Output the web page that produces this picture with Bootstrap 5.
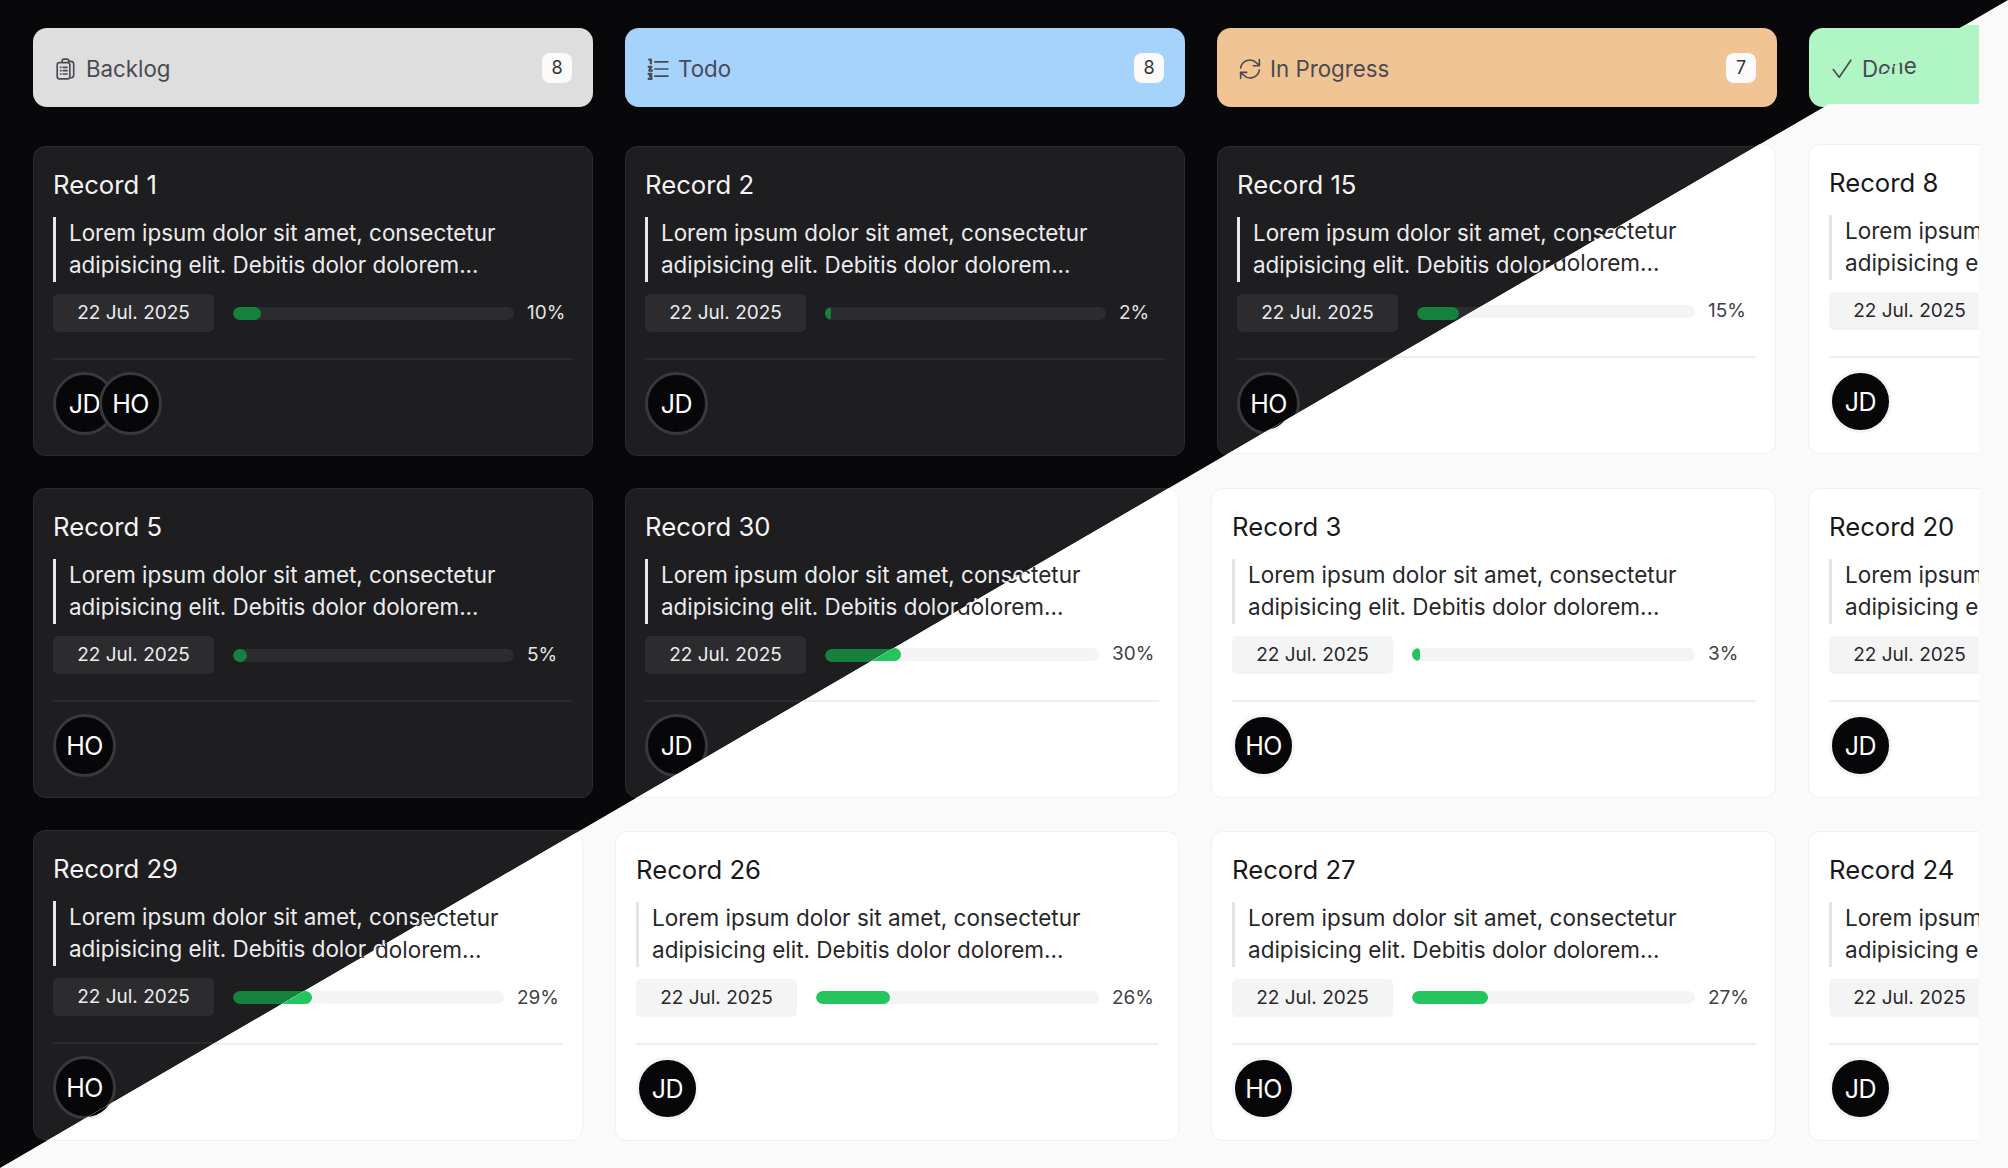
<!DOCTYPE html>
<html lang="en">
<head>
<meta charset="utf-8">
<title>Kanban</title>
<link href="https://cdn.jsdelivr.net/npm/bootstrap@5.3.0/dist/css/bootstrap.min.css" rel="stylesheet">
<style>
html,body{margin:0;height:100%;overflow:hidden}
body{font-family:Inter,"Liberation Sans",sans-serif;background:#08080b}
.kb-page{width:2008px;height:1168px;position:relative;overflow:hidden}
.kb-layer{position:absolute;top:0;left:0;width:2008px;height:1168px}
.kb-dark{background:#08080b;--t:#f4f4f5;--d:#ececee;--card:#1e1e20;--line:#2b2b2e;--chip:#2c2c2f;--bar:#e8e8ea;--fill:#16803d;--ava:#38383d;--pct:#e4e4e7;--rule:#2a2a2d}
.kb-light{background:#fafafa;clip-path:polygon(100% 0,100% 100%,0 100%);--t:#18181b;--d:#27272a;--card:#fff;--line:#f0f0f1;--chip:#f4f4f5;--bar:#e4e4e7;--fill:#22c55e;--ava:#f4f4f5;--pct:#3f3f46;--rule:#eeeef0}
.kb-board{width:1979px;height:1168px;overflow:hidden;padding-left:33px;gap:32px;padding-top:28px}
.kb-light .kb-board{padding-top:25px;gap:32px}
.kb-col{flex:0 0 560px;gap:32px}
.kb-light .kb-col{gap:33.3px}
.kb-light .kb-w1{flex-basis:550px}
.kb-light .kb-w2{flex-basis:564px}
.kb-light .kb-w3{flex-basis:565px}
.kb-head{height:79px;border-radius:14px;padding:2px 21px 0 22px;margin-bottom:7px;font-size:22.3px;color:#4a4a55;border:0}
.kb-h1{background:#dedede}.kb-h2{background:#a5d3fb}.kb-h3{background:#f0c593}.kb-h4{background:#b0f5c4}
.kb-ico{width:22px;height:22px;fill:none;stroke:#4a4a55;stroke-width:1.5;stroke-linecap:round;stroke-linejoin:round;margin-right:9px;flex:none}
.kb-count{background:#fafafa;color:#333338;font-size:18px;font-weight:400;border-radius:8px;min-width:30px;height:30px;line-height:30px;padding:0 8px;text-align:center;margin-top:-2px}
.kb-rec{height:310px;border-radius:12px;background:var(--card);border:1px solid var(--line)}
.kb-rec .card-body{padding:19px}
.kb-light .kb-rec .card-body{padding-left:20px}
.kb-title{font-size:25.7px;line-height:38px;font-weight:400;color:var(--t);margin:0 0 13px}
.kb-desc{font-size:22.4px;line-height:32px;color:var(--d);border-left:3px solid var(--bar);padding-left:13px;margin:0 0 12px;height:65px}
.kb-light .kb-desc{font-size:22.5px}
.kb-meta{height:38px;gap:0}
.kb-date{background:var(--chip);color:var(--d);font-size:19px;border-radius:5px;height:38px;width:161px;flex:none;text-align:center;line-height:38px}
.kb-track{height:13px;flex:0 1 283px;min-width:0;margin:0 13px 0 19px;background:var(--chip);border-radius:7px}
.kb-track .progress-bar{background:var(--fill);border-radius:7px}
.kb-pct{font-size:19px;color:var(--pct);flex:0 0 46px}
.kb-rule{height:2px;background:var(--rule);margin:26px 0 12px}
.kb-ava{width:63px;height:63px;border-radius:50%;background:#070709;border:3px solid var(--ava);color:#fff;font-size:25px;line-height:58px;text-align:center;letter-spacing:-.5px;flex:none}
.kb-ava+.kb-ava{margin-left:-17px}
</style>
</head>
<body>
<div class="kb-page">
<svg class="d-none" aria-hidden="true">
<symbol id="i-clip" viewBox="0 0 20 20"><path d="M6.500 3.500V2.600A1.600 1.600 0 0 1 8.100 1h2.800a1.600 1.600 0 0 1 1.600 1.600V3.500M12.500 3h2a2.500 2.500 0 0 1 2.500 2.500v10a2.500 2.500 0 0 1-2.500 2.500"/><rect x="2" y="4.200" width="11.500" height="14.800" rx="2"/><path d="M5 8.500h.5M7.500 8.500H11M5 11.500h.5M7.500 11.500H11M5 14.500h.5M7.500 14.500H11"/></symbol>
<symbol id="i-list" viewBox="0 0 20 20"><path d="M7 3.500h12M7 10h12M7 16.500h12"/><path stroke-width="2" d="M2 1.500h1.500V5M1.500 8h2.500L2 11.500h2.500M1.500 14.500h2.500L2.500 16.500h1.500V19h-2.500"/></symbol>
<symbol id="i-sync" viewBox="0 0 20 20"><path d="M1.500 9A8.500 8.500 0 0 1 16 4.500l2.500 2.500M18.500 1.500V7H13M18.500 11A8.500 8.500 0 0 1 4 15.500L1.500 13M1.500 18.500V13H7"/></symbol>
<symbol id="i-ok" viewBox="0 0 20 20"><path d="M2 10.500l5.500 7L18 2"/></symbol>
</svg>

<main class="kb-layer kb-dark">
<div class="kb-board d-flex">
<section class="kb-col d-flex flex-column">
<header class="kb-head kb-h1 d-flex align-items-center"><svg class="kb-ico"><use href="#i-clip"/></svg><span>Backlog</span><span class="kb-count ms-auto">8</span></header>
<article class="card kb-rec"><div class="card-body"><h5 class="kb-title">Record 1</h5><p class="kb-desc">Lorem ipsum dolor sit amet, consectetur adipisicing elit. Debitis dolor dolorem...</p><div class="kb-meta d-flex align-items-center"><span class="kb-date">22 Jul. 2025</span><div class="progress kb-track"><div class="progress-bar" style="width:10%"></div></div><span class="kb-pct">10%</span></div><div class="kb-rule"></div><div class="d-flex"><span class="kb-ava">JD</span><span class="kb-ava">HO</span></div></div></article>
<article class="card kb-rec"><div class="card-body"><h5 class="kb-title">Record 5</h5><p class="kb-desc">Lorem ipsum dolor sit amet, consectetur adipisicing elit. Debitis dolor dolorem...</p><div class="kb-meta d-flex align-items-center"><span class="kb-date">22 Jul. 2025</span><div class="progress kb-track"><div class="progress-bar" style="width:5%"></div></div><span class="kb-pct">5%</span></div><div class="kb-rule"></div><div class="d-flex"><span class="kb-ava">HO</span></div></div></article>
<article class="card kb-rec"><div class="card-body"><h5 class="kb-title">Record 29</h5><p class="kb-desc">Lorem ipsum dolor sit amet, consectetur adipisicing elit. Debitis dolor dolorem...</p><div class="kb-meta d-flex align-items-center"><span class="kb-date">22 Jul. 2025</span><div class="progress kb-track"><div class="progress-bar" style="width:29%"></div></div><span class="kb-pct">29%</span></div><div class="kb-rule"></div><div class="d-flex"><span class="kb-ava">HO</span></div></div></article>
</section>
<section class="kb-col d-flex flex-column">
<header class="kb-head kb-h2 d-flex align-items-center"><svg class="kb-ico"><use href="#i-list"/></svg><span>Todo</span><span class="kb-count ms-auto">8</span></header>
<article class="card kb-rec"><div class="card-body"><h5 class="kb-title">Record 2</h5><p class="kb-desc">Lorem ipsum dolor sit amet, consectetur adipisicing elit. Debitis dolor dolorem...</p><div class="kb-meta d-flex align-items-center"><span class="kb-date">22 Jul. 2025</span><div class="progress kb-track"><div class="progress-bar" style="width:2%"></div></div><span class="kb-pct">2%</span></div><div class="kb-rule"></div><div class="d-flex"><span class="kb-ava">JD</span></div></div></article>
<article class="card kb-rec"><div class="card-body"><h5 class="kb-title">Record 30</h5><p class="kb-desc">Lorem ipsum dolor sit amet, consectetur adipisicing elit. Debitis dolor dolorem...</p><div class="kb-meta d-flex align-items-center"><span class="kb-date">22 Jul. 2025</span><div class="progress kb-track"><div class="progress-bar" style="width:30%"></div></div><span class="kb-pct">30%</span></div><div class="kb-rule"></div><div class="d-flex"><span class="kb-ava">JD</span></div></div></article>
</section>
<section class="kb-col d-flex flex-column">
<header class="kb-head kb-h3 d-flex align-items-center"><svg class="kb-ico"><use href="#i-sync"/></svg><span>In Progress</span><span class="kb-count ms-auto">7</span></header>
<article class="card kb-rec"><div class="card-body"><h5 class="kb-title">Record 15</h5><p class="kb-desc">Lorem ipsum dolor sit amet, consectetur adipisicing elit. Debitis dolor dolorem...</p><div class="kb-meta d-flex align-items-center"><span class="kb-date">22 Jul. 2025</span><div class="progress kb-track"><div class="progress-bar" style="width:15%"></div></div><span class="kb-pct">15%</span></div><div class="kb-rule"></div><div class="d-flex"><span class="kb-ava">HO</span></div></div></article>
</section>
<section class="kb-col d-flex flex-column">
<header class="kb-head kb-h4 d-flex align-items-center"><svg class="kb-ico"><use href="#i-ok"/></svg><span>Done</span></header>
</section>
</div>
</main>

<div class="kb-layer kb-light">
<div class="kb-board d-flex">
<section class="kb-col kb-w1 d-flex flex-column">
<header class="kb-head kb-h1 invisible"></header>
<article class="card kb-rec invisible"></article>
<article class="card kb-rec invisible"></article>
<article class="card kb-rec"><div class="card-body"><h5 class="kb-title">Record 29</h5><p class="kb-desc">Lorem ipsum dolor sit amet, consectetur adipisicing elit. Debitis dolor dolorem...</p><div class="kb-meta d-flex align-items-center"><span class="kb-date">22 Jul. 2025</span><div class="progress kb-track"><div class="progress-bar" style="width:29%"></div></div><span class="kb-pct">29%</span></div><div class="kb-rule"></div><div class="d-flex"><span class="kb-ava">HO</span></div></div></article>
</section>
<section class="kb-col kb-w2 d-flex flex-column">
<header class="kb-head kb-h2 invisible"></header>
<article class="card kb-rec invisible"></article>
<article class="card kb-rec"><div class="card-body"><h5 class="kb-title">Record 30</h5><p class="kb-desc">Lorem ipsum dolor sit amet, consectetur adipisicing elit. Debitis dolor dolorem...</p><div class="kb-meta d-flex align-items-center"><span class="kb-date">22 Jul. 2025</span><div class="progress kb-track"><div class="progress-bar" style="width:30%"></div></div><span class="kb-pct">30%</span></div><div class="kb-rule"></div><div class="d-flex"><span class="kb-ava">JD</span></div></div></article>
<article class="card kb-rec"><div class="card-body"><h5 class="kb-title">Record 26</h5><p class="kb-desc">Lorem ipsum dolor sit amet, consectetur adipisicing elit. Debitis dolor dolorem...</p><div class="kb-meta d-flex align-items-center"><span class="kb-date">22 Jul. 2025</span><div class="progress kb-track"><div class="progress-bar" style="width:26%"></div></div><span class="kb-pct">26%</span></div><div class="kb-rule"></div><div class="d-flex"><span class="kb-ava">JD</span></div></div></article>
</section>
<section class="kb-col kb-w3 d-flex flex-column">
<header class="kb-head kb-h3 invisible"></header>
<article class="card kb-rec"><div class="card-body"><h5 class="kb-title">Record 15</h5><p class="kb-desc">Lorem ipsum dolor sit amet, consectetur adipisicing elit. Debitis dolor dolorem...</p><div class="kb-meta d-flex align-items-center"><span class="kb-date">22 Jul. 2025</span><div class="progress kb-track"><div class="progress-bar" style="width:15%"></div></div><span class="kb-pct">15%</span></div><div class="kb-rule"></div><div class="d-flex"><span class="kb-ava">HO</span></div></div></article>
<article class="card kb-rec"><div class="card-body"><h5 class="kb-title">Record 3</h5><p class="kb-desc">Lorem ipsum dolor sit amet, consectetur adipisicing elit. Debitis dolor dolorem...</p><div class="kb-meta d-flex align-items-center"><span class="kb-date">22 Jul. 2025</span><div class="progress kb-track"><div class="progress-bar" style="width:3%"></div></div><span class="kb-pct">3%</span></div><div class="kb-rule"></div><div class="d-flex"><span class="kb-ava">HO</span></div></div></article>
<article class="card kb-rec"><div class="card-body"><h5 class="kb-title">Record 27</h5><p class="kb-desc">Lorem ipsum dolor sit amet, consectetur adipisicing elit. Debitis dolor dolorem...</p><div class="kb-meta d-flex align-items-center"><span class="kb-date">22 Jul. 2025</span><div class="progress kb-track"><div class="progress-bar" style="width:27%"></div></div><span class="kb-pct">27%</span></div><div class="kb-rule"></div><div class="d-flex"><span class="kb-ava">HO</span></div></div></article>
</section>
<section class="kb-col d-flex flex-column">
<header class="kb-head kb-h4 d-flex align-items-center"><svg class="kb-ico"><use href="#i-ok"/></svg><span>Done</span></header>
<article class="card kb-rec"><div class="card-body"><h5 class="kb-title">Record 8</h5><p class="kb-desc">Lorem ipsum dolor sit amet, consectetur adipisicing elit. Debitis dolor dolorem...</p><div class="kb-meta d-flex align-items-center"><span class="kb-date">22 Jul. 2025</span></div><div class="kb-rule"></div><div class="d-flex"><span class="kb-ava">JD</span></div></div></article>
<article class="card kb-rec"><div class="card-body"><h5 class="kb-title">Record 20</h5><p class="kb-desc">Lorem ipsum dolor sit amet, consectetur adipisicing elit. Debitis dolor dolorem...</p><div class="kb-meta d-flex align-items-center"><span class="kb-date">22 Jul. 2025</span></div><div class="kb-rule"></div><div class="d-flex"><span class="kb-ava">JD</span></div></div></article>
<article class="card kb-rec"><div class="card-body"><h5 class="kb-title">Record 24</h5><p class="kb-desc">Lorem ipsum dolor sit amet, consectetur adipisicing elit. Debitis dolor dolorem...</p><div class="kb-meta d-flex align-items-center"><span class="kb-date">22 Jul. 2025</span></div><div class="kb-rule"></div><div class="d-flex"><span class="kb-ava">JD</span></div></div></article>
</section>
</div>
</div>
</div>
<script src="https://cdn.jsdelivr.net/npm/bootstrap@5.3.0/dist/js/bootstrap.bundle.min.js"></script>
</body>
</html>
